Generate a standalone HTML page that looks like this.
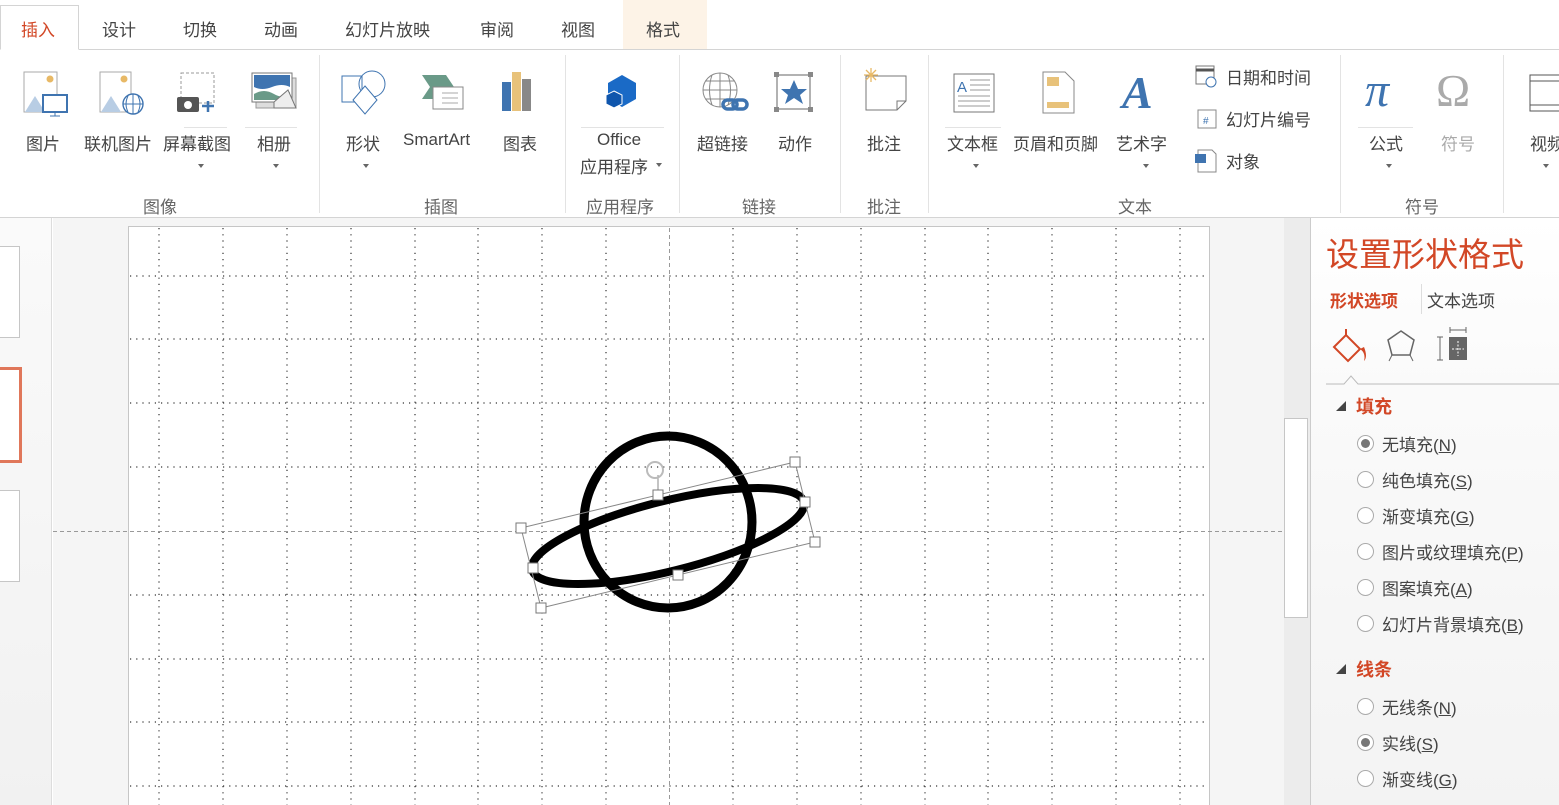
<!DOCTYPE html>
<html><head><meta charset="utf-8"><style>
*{margin:0;padding:0;box-sizing:border-box}
body{width:1559px;height:805px;overflow:hidden;background:#fff;font-family:"Liberation Sans","Noto Sans CJK SC",sans-serif;color:#444;position:relative}
.a{position:absolute}
.tab{position:absolute;top:16px;font-size:17px;color:#444}
.lbl{position:absolute;font-size:17px;color:#444;text-align:center;white-space:nowrap}
.grp{position:absolute;top:193px;font-size:17px;color:#666}
.sep{position:absolute;top:55px;width:1px;height:158px;background:#e3e3e3}
.dd{position:absolute;width:0;height:0;border-left:3px solid transparent;border-right:3px solid transparent;border-top:4px solid #666}
.rad{position:absolute;left:1357px;width:17px;height:17px;border:1px solid #aaa;border-radius:50%;background:#fff}
.rad.on::after{content:"";position:absolute;left:3px;top:3px;width:9px;height:9px;border-radius:50%;background:#777}
.opt{position:absolute;left:1382px;font-size:17px;color:#444}
.opt u{text-decoration:underline}
</style></head><body>
<div class="a" style="left:0;top:49px;width:1559px;height:1px;background:#d4d4d4"></div>
<div class="a" style="left:0;top:5px;width:79px;height:45px;border:1px solid #d4d4d4;border-bottom:1px solid #fff;background:#fff"></div>
<div class="a" style="left:623px;top:0;width:84px;height:49px;background:#fdf3e7"></div>
<div class="tab" style="left:21px;color:#d24726">插入</div>
<div class="tab" style="left:102px">设计</div>
<div class="tab" style="left:183px">切换</div>
<div class="tab" style="left:264px">动画</div>
<div class="tab" style="left:345px">幻灯片放映</div>
<div class="tab" style="left:480px">审阅</div>
<div class="tab" style="left:561px">视图</div>
<div class="tab" style="left:646px">格式</div>
<svg class="a" style="left:0;top:60px" width="1559" height="60">
 <rect x="24" y="12" width="33" height="40" fill="#fff" stroke="#aaa"/><circle cx="50" cy="19" r="3.5" fill="#e8b966"/><path d="M25 52 L35 36 L45 52Z" fill="#b8cde4"/><rect x="43" y="35" width="24" height="17" fill="#fff" stroke="#3f74b0" stroke-width="2"/><path d="M55 52v4M50 56h10" stroke="#3f74b0"/>
 <rect x="100" y="12" width="31" height="40" fill="#fff" stroke="#aaa"/><circle cx="124" cy="19" r="3.5" fill="#e8b966"/><path d="M101 52 L111 36 L121 52Z" fill="#b8cde4"/><circle cx="133" cy="44" r="10" fill="#fff" stroke="#3f74b0" stroke-width="1.4"/><path d="M123 44h20M133 34v20M128 36q-4 8 0 16M138 36q4 8 0 16" stroke="#3f74b0" fill="none"/>
 <rect x="181" y="13" width="33" height="30" fill="none" stroke="#999" stroke-dasharray="3 2"/><rect x="177" y="37" width="22" height="15" rx="2" fill="#555"/><circle cx="188" cy="45" r="4" fill="#fff"/><path d="M208 41v11M202 46h12" stroke="#3f74b0" stroke-width="2.5"/>
 <rect x="256" y="18" width="40" height="30" fill="#ddd" stroke="#999"/><rect x="252" y="13" width="40" height="29" fill="#fff" stroke="#777"/><path d="M254 15h36v12q-8-4-18 0t-18 0z" fill="#3f74b0"/><path d="M254 34q10-6 20 0t16-2v8h-36z" fill="#6a9a88"/><path d="M274 42 L288 30 L296 48 L274 48Z" fill="#eee" stroke="#777"/>
 <rect x="342" y="16" width="20" height="26" fill="#fff" stroke="#3f74b0"/><circle cx="372" cy="24" r="13" fill="none" stroke="#3f74b0"/><path d="M365 26 L377 40 L365 54 L353 40Z" fill="#fff" stroke="#3f74b0"/>
 <path d="M422 15h24l8 12-8 12h-24l8-12z" fill="#6a9a88"/><rect x="433" y="27" width="30" height="22" fill="#fff" stroke="#888"/><path d="M442 33h16M442 38h16M442 43h16" stroke="#aaa"/>
 <rect x="502" y="22" width="9" height="29" fill="#3f74b0"/><rect x="512" y="12" width="9" height="39" fill="#e8c27a"/><rect x="522" y="19" width="9" height="32" fill="#888"/>
 <path d="M622 15l14 8v16l-14 8-14-8v-16z" fill="#1a6ac6"/><path d="M614 31l8 4v9l-8 4-8-4v-9z" fill="#0f56ad" stroke="#fff" stroke-width="1"/>
 <circle cx="720" cy="30" r="17" fill="none" stroke="#888"/><path d="M703 30h34M720 13v34M712 15q-5 15 0 30M728 15q5 15 0 30M706 21h28M706 39h28" stroke="#888" fill="none"/><rect x="723" y="40" width="14" height="9" rx="4.5" fill="none" stroke="#3f74b0" stroke-width="3.5"/><rect x="733" y="40" width="14" height="9" rx="4.5" fill="none" stroke="#3f74b0" stroke-width="3.5"/>
 <rect x="777" y="15" width="33" height="34" fill="#fff" stroke="#666"/><rect x="774" y="12" width="5" height="5" fill="#888"/><rect x="808" y="12" width="5" height="5" fill="#888"/><rect x="774" y="47" width="5" height="5" fill="#888"/><rect x="808" y="47" width="5" height="5" fill="#888"/><path d="M794 20l4 9h9l-7 6 3 9-9-6-9 6 3-9-7-6h9z" fill="#3f74b0"/>
 <path d="M866 16h40v25l-9 9h-31z" fill="#fff" stroke="#777"/><path d="M897 50v-9h9" fill="none" stroke="#777"/><path d="M871 8v14M864 15h14M866 10l10 10M876 10l-10 10" stroke="#e8b966" stroke-width="1.3"/>
 <rect x="954" y="14" width="40" height="38" fill="#fff" stroke="#777"/><text x="957" y="32" font-size="15" fill="#3f74b0" font-family="Liberation Sans">A</text><path d="M970 20h20M970 25h20M970 30h20M958 36h32M958 41h32M958 46h32" stroke="#999"/>
 <path d="M1043 12h22l9 9v32h-31z" fill="#fff" stroke="#888"/><rect x="1047" y="17" width="12" height="9" fill="#e8c27a"/><rect x="1047" y="42" width="22" height="6" fill="#e8c27a"/>
 <text x="1122" y="48" font-size="46" font-style="italic" font-weight="bold" fill="#3f74b0" font-family="Liberation Serif">A</text>
 <text x="1365" y="46" font-size="48" fill="#3f74b0" font-family="Liberation Serif" font-style="italic">π</text>
 <text x="1436" y="46" font-size="46" fill="#aaa" font-family="Liberation Serif">Ω</text>
 <rect x="1530" y="15" width="35" height="36" fill="#fff" stroke="#555"/><path d="M1530 21h35M1530 45h35" stroke="#555"/>
</svg>
<svg class="a" style="left:1194px;top:64px" width="30" height="110">
 <rect x="2" y="2" width="18" height="18" fill="#fff" stroke="#777"/><path d="M2 6h18" stroke="#555" stroke-width="3"/><circle cx="17" cy="18" r="5" fill="#fff" stroke="#3f74b0"/>
 <rect x="4" y="46" width="18" height="18" fill="#fff" stroke="#888"/><text x="9" y="60" font-size="10" fill="#3f74b0">#</text>
 <path d="M4 86h14l4 4v18h-18z" fill="#fff" stroke="#888"/><rect x="1" y="90" width="11" height="9" fill="#3f74b0"/>
</svg>
<div class="a" style="left:1226px;top:64px;font-size:17px">日期和时间</div>
<div class="a" style="left:1226px;top:106px;font-size:17px">幻灯片编号</div>
<div class="a" style="left:1226px;top:148px;font-size:17px">对象</div>
<div class="lbl" style="left:26px;top:130px">图片</div>
<div class="lbl" style="left:84px;top:130px">联机图片</div>
<div class="lbl" style="left:163px;top:130px">屏幕截图</div><div class="dd" style="left:198px;top:164px"></div>
<div class="a" style="left:184px;top:127px;width:43px;height:1px;background:#e3e3e3"></div>
<div class="lbl" style="left:257px;top:130px">相册</div><div class="dd" style="left:273px;top:164px"></div>
<div class="a" style="left:245px;top:127px;width:52px;height:1px;background:#e3e3e3"></div>
<div class="lbl" style="left:346px;top:130px">形状</div><div class="dd" style="left:363px;top:164px"></div>
<div class="lbl" style="left:403px;top:130px">SmartArt</div>
<div class="lbl" style="left:503px;top:130px">图表</div>
<div class="a" style="left:581px;top:127px;width:83px;height:1px;background:#e3e3e3"></div>
<div class="lbl" style="left:597px;top:130px">Office</div>
<div class="lbl" style="left:580px;top:153px">应用程序</div><div class="dd" style="left:656px;top:163px"></div>
<div class="lbl" style="left:697px;top:130px">超链接</div>
<div class="lbl" style="left:778px;top:130px">动作</div>
<div class="lbl" style="left:867px;top:130px">批注</div>
<div class="a" style="left:945px;top:127px;width:56px;height:1px;background:#e3e3e3"></div>
<div class="lbl" style="left:947px;top:130px">文本框</div><div class="dd" style="left:973px;top:164px"></div>
<div class="lbl" style="left:1013px;top:130px">页眉和页脚</div>
<div class="lbl" style="left:1116px;top:130px">艺术字</div><div class="dd" style="left:1143px;top:164px"></div>
<div class="a" style="left:1358px;top:127px;width:55px;height:1px;background:#e3e3e3"></div>
<div class="lbl" style="left:1369px;top:130px">公式</div><div class="dd" style="left:1386px;top:164px"></div>
<div class="lbl" style="left:1441px;top:130px;color:#aaa">符号</div>
<div class="lbl" style="left:1530px;top:130px">视频</div><div class="dd" style="left:1543px;top:164px"></div>
<div class="grp" style="left:143px">图像</div>
<div class="grp" style="left:424px">插图</div>
<div class="grp" style="left:586px">应用程序</div>
<div class="grp" style="left:742px">链接</div>
<div class="grp" style="left:867px">批注</div>
<div class="grp" style="left:1118px">文本</div>
<div class="grp" style="left:1405px">符号</div>
<div class="sep" style="left:319px"></div>
<div class="sep" style="left:565px"></div>
<div class="sep" style="left:679px"></div>
<div class="sep" style="left:840px"></div>
<div class="sep" style="left:928px"></div>
<div class="sep" style="left:1340px"></div>
<div class="sep" style="left:1503px"></div>
<div class="a" style="left:0;top:217px;width:1559px;height:1px;background:#d4d4d4"></div>
<div class="a" style="left:0;top:218px;width:52px;height:587px;background:linear-gradient(#fafafa,#f1f1f1);border-right:1px solid #ddd"></div>
<div class="a" style="left:-2px;top:246px;width:22px;height:92px;background:#fff;border:1px solid #c6c6c6"></div>
<div class="a" style="left:-4px;top:367px;width:26px;height:96px;background:#fff;border:3px solid #e0775a"></div>
<div class="a" style="left:-2px;top:490px;width:22px;height:92px;background:#fff;border:1px solid #c6c6c6"></div>
<div class="a" style="left:53px;top:218px;width:1231px;height:587px;background:#f5f5f5"></div>
<div class="a" style="left:1284px;top:218px;width:26px;height:587px;background:#ececec"></div>
<div class="a" style="left:1284px;top:418px;width:24px;height:200px;background:#fff;border:1px solid #c6c6c6"></div>
<svg class="a" style="left:0;top:0" width="1310" height="805">
 <rect x="128.5" y="226.5" width="1081" height="590" fill="#fff" stroke="#c6c6c6"/>
 <g stroke="#333" stroke-width="1.2" stroke-dasharray="1.2 5">
  <path d="M159 228V805M223 228V805M287 228V805M351 228V805M415 228V805M478 228V805M542 228V805M606 228V805M733 228V805M797 228V805M861 228V805M925 228V805M988 228V805M1052 228V805M1116 228V805M1180 228V805"/>
  <path d="M130 276H1208M130 339H1208M130 403H1208M130 467H1208M130 595H1208M130 659H1208M130 722H1208M130 786H1208"/>
 </g>
 <g stroke="#999" stroke-dasharray="4 3"><path d="M669.5 228V805M53 531.5H1282"/></g>
 <ellipse cx="668" cy="522" rx="84" ry="86" fill="none" stroke="#000" stroke-width="9"/>
 <ellipse cx="668" cy="536" rx="140" ry="35" fill="none" stroke="#000" stroke-width="8" transform="rotate(-14 668 536)"/>
 <path d="M521 528L795 462L815 542L541 608Z" fill="none" stroke="#888"/>
 <path d="M658 494V475" stroke="#888"/>
 <circle cx="655" cy="470" r="8" fill="none" stroke="#bbb" stroke-width="2"/>
 <g fill="#fff" stroke="#777">
  <rect x="516" y="523" width="10" height="10"/><rect x="790" y="457" width="10" height="10"/><rect x="810" y="537" width="10" height="10"/><rect x="536" y="603" width="10" height="10"/>
  <rect x="653" y="490" width="10" height="10"/><rect x="673" y="570" width="10" height="10"/><rect x="528" y="563" width="10" height="10"/><rect x="800" y="497" width="10" height="10"/>
 </g>
</svg>
<div class="a" style="left:1310px;top:218px;width:249px;height:587px;background:linear-gradient(#fff,#fafafa 30%,#f3f3f3);border-left:1px solid #ccc"></div>
<div class="a" style="left:1326px;top:228px;font-size:33px;color:#d24726">设置形状格式</div>
<div class="a" style="left:1330px;top:287px;font-size:17px;color:#d24726;font-weight:bold">形状选项</div>
<div class="a" style="left:1421px;top:284px;width:1px;height:30px;background:#ddd"></div>
<div class="a" style="left:1427px;top:287px;font-size:17px;color:#444">文本选项</div>
<svg class="a" style="left:1326px;top:325px" width="233" height="62">
 <path d="M8 22 L20 10 L34 24 L22 36Z" fill="none" stroke="#d24726" stroke-width="2"/><path d="M20 10v-6" stroke="#d24726" stroke-width="2"/><path d="M34 24q6 4 4 12q4-4 0-14z" fill="#d24726"/>
 <path d="M75 6 L88 15 L84 30 L66 30 L62 15Z" fill="none" stroke="#666" stroke-width="1.5"/><path d="M66 30l-3 6M84 30l3 6" stroke="#666"/>
 <rect x="123" y="12" width="18" height="23" fill="#666"/><path d="M124 5h16M124 2v6M140 2v6M114 12v23M111 12h6M111 35h6" stroke="#666"/><path d="M132 16v15M126 24h12" stroke="#fff" stroke-dasharray="2 1.5"/>
 <path d="M0 59H18L25 51L32 59H233" fill="none" stroke="#bbb"/>
</svg>
<svg class="a" style="left:1334px;top:397px" width="16" height="300"><path d="M2 14L12 4V14Z" fill="#444"/><path d="M2 277L12 267V277Z" fill="#444"/></svg>
<div class="a" style="left:1356px;top:393px;font-size:18px;color:#d24726;font-weight:bold">填充</div>
<div class="a" style="left:1356px;top:656px;font-size:18px;color:#d24726;font-weight:bold">线条</div>
<div class="rad on" style="top:435px"></div><div class="opt" style="top:431px">无填充(<u>N</u>)</div>
<div class="rad" style="top:471px"></div><div class="opt" style="top:467px">纯色填充(<u>S</u>)</div>
<div class="rad" style="top:507px"></div><div class="opt" style="top:503px">渐变填充(<u>G</u>)</div>
<div class="rad" style="top:543px"></div><div class="opt" style="top:539px">图片或纹理填充(<u>P</u>)</div>
<div class="rad" style="top:579px"></div><div class="opt" style="top:575px">图案填充(<u>A</u>)</div>
<div class="rad" style="top:615px"></div><div class="opt" style="top:611px">幻灯片背景填充(<u>B</u>)</div>
<div class="rad" style="top:698px"></div><div class="opt" style="top:694px">无线条(<u>N</u>)</div>
<div class="rad on" style="top:734px"></div><div class="opt" style="top:730px">实线(<u>S</u>)</div>
<div class="rad" style="top:770px"></div><div class="opt" style="top:766px">渐变线(<u>G</u>)</div>
</body></html>
